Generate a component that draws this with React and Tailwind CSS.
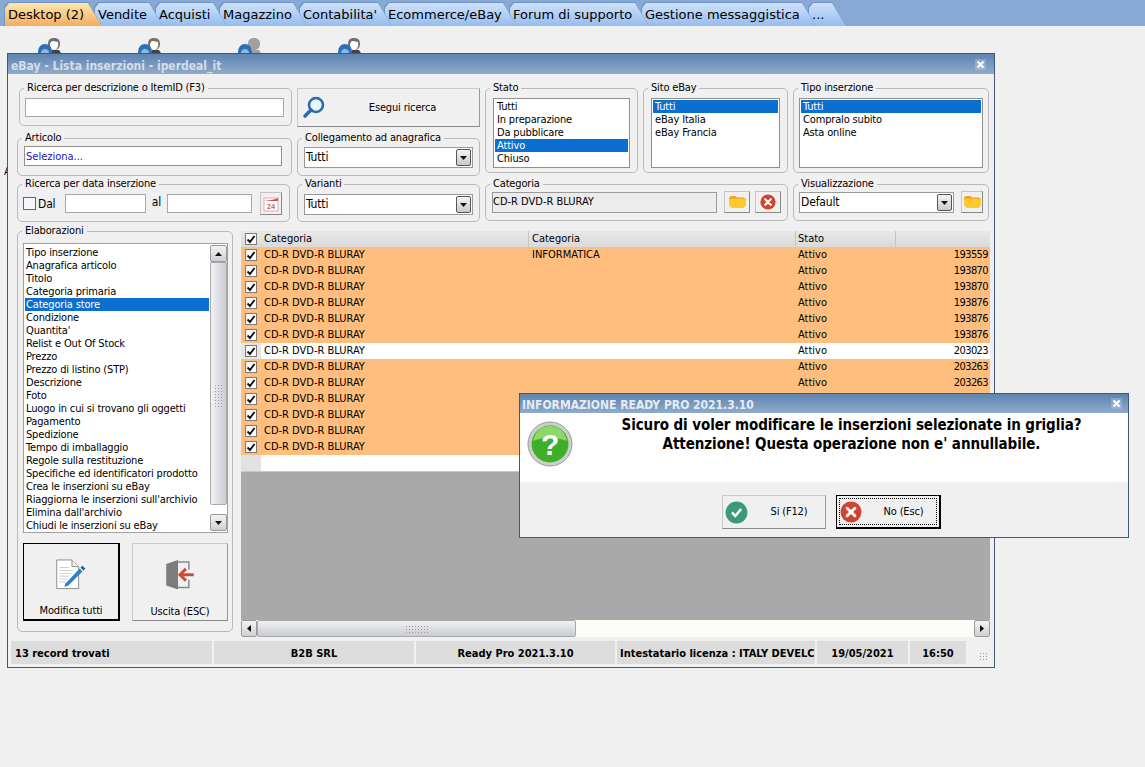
const tabs = [
  { label: 'Desktop (2)', w: 'w-[98px]', z: 'z-[9]', active: true },
  { label: 'Vendite', w: 'w-[69px]', z: 'z-[8]' },
  { label: "Acquisti", w: 'w-[72px]', z: 'z-[7]' },
  { label: 'Magazzino', w: 'w-[88px]', z: 'z-[6]' },
  { label: "Contabilita'", w: 'w-[93px]', z: 'z-[5]' },
  { label: 'Ecommerce/eBay', w: 'w-[133px]', z: 'z-[4]' },
  { label: 'Forum di supporto', w: 'w-[140px]', z: 'z-[3]' },
  { label: 'Gestione messaggistica', w: 'w-[175px]', z: 'z-[2]' },
  { label: '...', w: 'w-[38px]', z: 'z-[1]' },
]

const elaborazioni = [
  'Tipo inserzione', 'Anagrafica articolo', 'Titolo', 'Categoria primaria', 'Categoria store', 'Condizione',
  "Quantita'", 'Relist e Out Of Stock', 'Prezzo', 'Prezzo di listino (STP)', 'Descrizione', 'Foto',
  'Luogo in cui si trovano gli oggetti', 'Pagamento', 'Spedizione', 'Tempo di imballaggio', 'Regole sulla restituzione',
  'Specifiche ed identificatori prodotto', 'Crea le inserzioni su eBay', "Riaggiorna le inserzioni sull'archivio",
  "Elimina dall'archivio", 'Chiudi le inserzioni su eBay',
]

const rows = [
  { cat2: 'INFORMATICA', id: '193559' },
  { id: '193870' },
  { id: '193870' },
  { id: '193876' },
  { id: '193876' },
  { id: '193876' },
  { id: '203023', white: true },
  { id: '203263' },
  { id: '203263' },
  { id: '' },
  { id: '' },
  { id: '' },
  { id: '' },
]

function Group({ label, className = '', pad = '', children }) {
  return (
    <fieldset className={`border border-[#b9b9b9] rounded-[5px] min-w-0 shrink-0 ${className}`}>
      <legend className="ml-[4px] px-[3px] h-[14px] leading-[14px]">{label}</legend>
      <div className={pad}>{children}</div>
    </fieldset>
  )
}

function Listbox({ items, selected, className = '' }) {
  return (
    <div className={`bg-white border border-[#8f8f8f] p-[1px] ${className}`}>
      {items.map((item) => (
        <div key={item} className={`h-[13px] leading-[13px] px-[2px] ${item === selected ? 'bg-[#0a6fd0] text-white' : ''}`}>{item}</div>
      ))}
    </div>
  )
}

function Arrow({ dir = 'down' }) {
  return (
    <svg width="9" height="6" viewBox="0 0 9 6">
      <path d={dir === 'down' ? 'M1 1h7L4.500 5z' : 'M1 5h7L4.500 1z'} fill="#111" />
    </svg>
  )
}

function Select({ value, className = '' }) {
  return (
    <div className={`h-[21px] bg-white border border-[#9a9a9a] flex items-center pl-[1px] pr-[1px] ${className}`}>
      <span className="flex-1 text-[12px] leading-[19px]">{value}</span>
      <div className="w-[15px] h-[17px] rounded-[2px] border border-[#555] bg-gradient-to-b from-[#f4f4f4] to-[#c9c9c9] flex items-center justify-center">
        <Arrow />
      </div>
    </div>
  )
}

function Folder() {
  return (
    <svg width="19" height="14" viewBox="0 0 19 14">
      <path d="M1 5V3.500C1 2 2 1 3.500 1h4L9 2.500h6.500C17 2.500 18 3.500 18 5z" fill="#e9a820" />
      <path d="M1 5c0-.8.600-1.200 1.500-1.200h14c.900 0 1.500.400 1.500 1.200v3.500C18 11.500 16 13 13.500 13h-8C3 13 1 11.500 1 8.500z" fill="#fdc92e" />
    </svg>
  )
}

function RedX({ size = 20 }) {
  return (
    <svg width={size} height={size} viewBox="0 0 20 20">
      <circle cx="10" cy="10" r="9.500" fill="#d0432f" />
      <path d="M6.500 6.500l7 7M13.500 6.500l-7 7" stroke="#fff" strokeWidth="2.600" strokeLinecap="round" />
    </svg>
  )
}

function Check() {
  return (
    <span className="w-[12px] h-[12px] bg-white border border-[#7c7c7c] flex items-center justify-center">
      <svg width="10" height="9" viewBox="0 0 10 9"><path d="M1.500 4.500L4 7l4.500-6" stroke="#111" strokeWidth="2" fill="none" /></svg>
    </span>
  )
}

function ScrollGrip({ className = '' }) {
  return <div className={`bg-[radial-gradient(#9a9a9a_0.6px,transparent_0.8px)] bg-[length:3px_3px] ${className}`} />
}

function CloseX() {
  return (
    <svg width="11" height="11" viewBox="0 0 11 11" className="bg-white/20">
      <path d="M2.500 2.500l6 6M8.500 2.500l-6 6" stroke="#fff" strokeWidth="2.200" />
    </svg>
  )
}

// Due figure sovrapposte: testa chiara dietro, sagoma blu davanti (tagliate dalla finestra)
function Person({ back = '#777', face = '#fff', shoulders = '#444' }) {
  return (
    <svg width="24" height="16" viewBox="0 0 24 16">
      <path d="M13 16l1-3h7l2 3z" fill={shoulders} />
      <path d="M10 7c0-4 2-6 6-6s6 2 6 6c0 3-2 6-6 6s-6-3-6-6z" fill={back} />
      <path d="M12 8c0-2 1-4 3-4l5 1c1 4-1 8-4 8-2 0-4-2-4-5z" fill={face} />
      <path d="M0 16c0-6 3-9 7-9s7 3 7 9z" fill="#2f6fb8" />
      <path d="M3 16c0-3 2-4 4-4s4 1 4 4z" fill="#8fb8e0" />
    </svg>
  )
}

export default function App() {
  return (
    <div className="relative min-h-screen bg-[#f0f0f0] text-[11px] tracking-[-0.16px] text-black overflow-hidden font-['DejaVu_Sans_Condensed','Liberation_Sans',sans-serif]">
      {/* Barra schede */}
      <div className="h-[26px] bg-[#88a9d6] pl-[4px] pt-[2px] flex items-start">
        {tabs.map((t) => (
          <div
            key={t.label}
            className={`relative ${t.z} ${t.w} h-[24px] -mr-[8px] shrink-0 pt-[1px] pl-[1px] bg-[#6f93c6] [clip-path:polygon(0_100%,0_5px,4px_0,calc(100%-14px)_0,100%_100%)]`}
          >
            <div
              className={`h-full w-full pl-[3px] pt-[4px] font-['DejaVu_Sans',sans-serif] tracking-normal text-[13px] leading-[16px] [clip-path:polygon(0_100%,0_5px,4px_0,calc(100%-14px)_0,100%_100%)] ${t.active ? 'bg-gradient-to-b from-[#fde6ac] to-[#f3ad5e]' : 'bg-gradient-to-b from-[#cfe1f9] to-[#94bdf0]'}`}
            >
              {t.label}
            </div>
          </div>
        ))}
      </div>

      {/* Icone desktop */}
      <div className="flex pl-[38px] pt-[11px] gap-[76px]">
        <Person back="#6f6f6f" />
        <Person back="#7f6f66" />
        <Person back="#a0a0a0" face="#a0a0a0" shoulders="#a0a0a0" />
        <Person back="#6f6f6f" />
      </div>
      <span className="absolute left-[4px] top-[164px]">A</span>

      {/* Finestra lista inserzioni */}
      <div className="absolute left-[7px] top-[53px] w-[988px] h-[615px] bg-[#f0f0f0] border border-[#3e5a78] flex flex-col">
        <div className="h-[20px] shrink-0 bg-gradient-to-b from-[#5d84b0] to-[#8fabcb] flex items-center justify-between pl-[3px] pr-[8px]">
          <span className="pt-[3px] font-bold text-[12px] tracking-normal text-[#d5deE8]">eBay - Lista inserzioni - iperdeal_it</span>
          <CloseX />
        </div>

        <div className="flex mt-[7px] shrink-0">
          {/* Colonna filtri sinistra */}
          <div className="w-[463px] ml-[9px] shrink-0">
            <div className="flex">
              <Group label="Ricerca per descrizione o ItemID (F3)" className="ml-[2px] w-[273px] h-[45px]" pad="pl-[5px] pr-[7px]">
                <div className="mt-[3px] h-[19px] bg-white border border-[#a8a8a8]" />
              </Group>
              <button className="ml-[5px] mt-[7px] w-[183px] h-[39px] bg-[#f0f0f0] border border-[#c9c9c9] border-b-[#888] border-r-[#999] flex items-center pl-[4px]">
                <svg width="24" height="24" viewBox="0 0 24 24">
                  <circle cx="14" cy="9" r="7" fill="#eaf4fb" stroke="#2a6da8" strokeWidth="2.600" />
                  <path d="M9 14l-6 6" stroke="#2a6da8" strokeWidth="3.600" strokeLinecap="round" />
                </svg>
                <span className="flex-1 text-center pt-[2px]">Esegui ricerca</span>
              </button>
            </div>
            <div className="flex mt-[4px]">
              <Group label="Articolo" className="w-[275px] h-[45px]" pad="pl-[6px] pr-[9px]">
                <div className="mt-[1px] h-[20px] bg-white border border-[#8f8f8f] text-[#1414c4] tracking-normal leading-[20px] pl-[1px]">Seleziona...</div>
              </Group>
              <Group label="Collegamento ad anagrafica" className="ml-[5px] w-[183px] h-[45px]" pad="px-[6px]">
                <Select value="Tutti" className="mt-[2px]" />
              </Group>
            </div>
            <div className="flex mt-[1px]">
              <Group label="Ricerca per data inserzione" className="w-[273px] h-[45px]" pad="pl-[5px] pr-[7px]">
                <div className="flex items-center mt-[1px]">
                  <span className="w-[13px] h-[13px] bg-[#f4f7fb] border border-[#4c6a8c]" />
                  <span className="ml-[2px] text-[12px] w-[27px]">Dal</span>
                  <div className="w-[81px] h-[19px] bg-white border border-[#a8a8a8]" />
                  <span className="w-[21px] mb-[4px] text-center text-[12px]">al</span>
                  <div className="w-[85px] h-[19px] bg-white border border-[#a8a8a8]" />
                  <button className="ml-[8px] w-[22px] h-[23px] border border-[#c4c4c4] border-b-[#888] border-r-[#888] flex items-center justify-center">
                    <svg width="16" height="16" viewBox="0 0 16 16">
                      <rect x="1" y="2" width="14" height="13" fill="#fff" stroke="#d9b0a8" />
                      <path d="M1 5c4-1 10-1 14-3v3H1z" fill="#d8503c" />
                      <text x="8" y="13" textAnchor="middle" fontSize="7" fontWeight="700" fill="#d8705c">24</text>
                    </svg>
                  </button>
                </div>
              </Group>
              <Group label="Varianti" className="ml-[7px] w-[183px] h-[45px]" pad="px-[6px]">
                <Select value="Tutti" className="mt-[3px]" />
              </Group>
            </div>
          </div>

          {/* Colonna filtri destra */}
          <div className="ml-[5px] w-[505px] shrink-0">
            <div className="flex gap-[5px]">
              <Group label="Stato" className="w-[153px] h-[92px]" pad="px-[7px]">
                <Listbox items={['Tutti', 'In preparazione', 'Da pubblicare', 'Attivo', 'Chiuso']} selected="Attivo" className="mt-[3px] h-[70px]" />
              </Group>
              <Group label="Sito eBay" className="w-[145px] h-[92px]" pad="px-[7px]">
                <Listbox items={['Tutti', 'eBay Italia', 'eBay Francia']} selected="Tutti" className="mt-[3px] h-[70px]" />
              </Group>
              <Group label="Tipo inserzione" className="w-[196px] h-[92px]" pad="px-[5px]">
                <Listbox items={['Tutti', 'Compralo subito', 'Asta online']} selected="Tutti" className="mt-[3px] h-[70px]" />
              </Group>
            </div>
            <div className="flex gap-[5px] mt-[4px]">
              <Group label="Categoria" className="w-[303px] h-[44px]" pad="pl-[6px]">
                <div className="flex items-center">
                  <div className="w-[225px] h-[21px] bg-[#ececec] border border-[#9a9a9a] leading-[17px] tracking-normal">CD-R DVD-R BLURAY</div>
                  <button className="ml-[7px] w-[26px] h-[22px] border border-[#c4c4c4] border-b-[#888] border-r-[#888] flex items-center justify-center"><Folder /></button>
                  <button className="ml-[5px] w-[26px] h-[22px] border border-[#c4c4c4] border-b-[#888] border-r-[#888] flex items-center justify-center"><RedX size={16} /></button>
                </div>
              </Group>
              <Group label="Visualizzazione" className="w-[196px] h-[44px]" pad="px-[5px]">
                <div className="flex items-center">
                  <Select value="Default" className="w-[156px] mt-[1px]" />
                  <button className="ml-[7px] w-[22px] h-[22px] border border-[#c4c4c4] border-b-[#888] border-r-[#888] flex items-center justify-center"><Folder /></button>
                </div>
              </Group>
            </div>
          </div>
        </div>

        <div className="flex mt-[2px] flex-1 min-h-0">
          {/* Elaborazioni */}
          <Group label="Elaborazioni" className="ml-[9px] w-[216px] h-[408px]" pad="pl-[5px] pr-[4px]">
            <div className="mt-[5px] h-[290px] bg-white border border-[#a0a0a0] flex">
              <div className="flex-1 pt-[2px] px-[1px]">
                {elaborazioni.map((e) => (
                  <div key={e} className={`h-[13px] leading-[13px] pl-[1px] ${e === 'Categoria store' ? 'bg-[#0a6fd0] text-white' : ''}`}>{e}</div>
                ))}
              </div>
              <div className="w-[17px] flex flex-col">
                <div className="h-[17px] mt-[1px] rounded-[2px] border border-[#9a9a9a] bg-gradient-to-b from-[#f4f4f4] to-[#d0d0d0] flex items-center justify-center"><Arrow dir="up" /></div>
                <div className="h-[243px] rounded-b-[2px] border border-[#a9a9a9] bg-gradient-to-r from-[#f2f2f4] to-[#c9ccd4] flex items-center justify-center">
                  <ScrollGrip className="w-[9px] h-[24px] mt-[24px]" />
                </div>
                <div className="flex-1" />
                <div className="h-[17px] mb-[1px] rounded-[2px] border border-[#9a9a9a] bg-gradient-to-b from-[#f4f4f4] to-[#d0d0d0] flex items-center justify-center"><Arrow /></div>
              </div>
            </div>
            <div className="flex justify-between mt-[10px]">
              <button className="w-[97px] h-[78px] bg-[#f0f0f0] border border-black border-r-2 border-b-2 flex flex-col items-center pt-[15px]">
                <svg width="32" height="32" viewBox="0 0 32 32">
                  <path d="M1 1h16l7 7v23H1z" fill="#fff" stroke="#8a8a8a" />
                  <path d="M17 1v7h7" fill="#eee" stroke="#8a8a8a" />
                  <path d="M4 9h10M4 12h14M4 15h12M4 18h10M4 21h8M4 24h7" stroke="#c9c9c9" />
                  <path d="M10 26l15-16 3 3-15 15-4 1z" fill="#2f80c8" />
                  <path d="M26 9l2-2 3 3-2 2z" fill="#1f5f9c" />
                </svg>
                <span className="mt-[13px]">Modifica tutti</span>
              </button>
              <button className="w-[96px] h-[78px] bg-[#f0f0f0] border border-[#c9c9c9] border-b-[#888] border-r-[#999] flex flex-col items-center pt-[15px]">
                <svg width="32" height="32" viewBox="0 0 32 32">
                  <path d="M2 5l12-4v30L2 27z" fill="#7c7c7c" />
                  <path d="M14 3h11v8M25 21v8H14" fill="none" stroke="#8a8a8a" strokeWidth="1.500" />
                  <path d="M30 16H17" stroke="#cf4b34" strokeWidth="3" />
                  <path d="M22 10l-6 6 6 6" fill="none" stroke="#cf4b34" strokeWidth="3" />
                </svg>
                <span className="mt-[13px]">Uscita (ESC)</span>
              </button>
            </div>
          </Group>

          {/* Griglia */}
          <div className="ml-[8px] mt-[7px] w-[749px] h-[406px] bg-[#a9a9a9] flex flex-col tracking-normal">
            <div className="flex h-[16px] bg-gradient-to-b from-[#e8e8e8] to-[#dadada] shrink-0">
              <div className="w-[20px] flex items-center justify-center"><Check /></div>
              <div className="w-[268px] pl-[3px] leading-[16px] border-r border-[#c4c4c4]">Categoria</div>
              <div className="w-[267px] pl-[3px] leading-[16px] border-r border-[#c4c4c4]">Categoria</div>
              <div className="w-[100px] pl-[2px] leading-[16px] border-r border-[#c4c4c4]">Stato</div>
              <div className="flex-1" />
            </div>
            {rows.map((r, i) => (
              <div key={i} className={`flex h-[16px] shrink-0 leading-[16px] ${r.white ? 'bg-white' : 'bg-[#ffbe7d]'}`}>
                <div className={`w-[20px] flex items-center justify-center ${r.white ? 'bg-[#e6e6e6]' : ''}`}><Check /></div>
                <div className="w-[268px] pl-[3px]">CD-R DVD-R BLURAY</div>
                <div className="w-[267px] pl-[3px]">{r.cat2}</div>
                <div className="w-[100px] pl-[2px]">Attivo</div>
                <div className="flex-1 text-right pr-[2px] tracking-[-0.6px]">{r.id}</div>
              </div>
            ))}
            <div className="flex h-[17px] shrink-0 bg-white border-b border-[#c8c8c8]">
              <div className="w-[20px] bg-[#e2e2e2]" />
            </div>
            <div className="flex-1" />
            <div className="h-[17px] shrink-0 bg-[#fdfdf8] flex">
              <div className="w-[16px] rounded-[2px] border border-[#9a9a9a] bg-gradient-to-b from-[#f4f4f4] to-[#d0d0d0] flex items-center justify-center">
                <svg width="6" height="9" viewBox="0 0 6 9"><path d="M5 1v7L1 4.500z" fill="#111" /></svg>
              </div>
              <div className="w-[319px] rounded-[2px] border border-[#a9a9a9] bg-gradient-to-b from-[#f2f2f4] to-[#c9ccd4] flex items-center justify-center">
                <ScrollGrip className="w-[24px] h-[8px]" />
              </div>
              <div className="flex-1" />
              <div className="w-[16px] rounded-[2px] border border-[#9a9a9a] bg-gradient-to-b from-[#f4f4f4] to-[#d0d0d0] flex items-center justify-center">
                <svg width="6" height="9" viewBox="0 0 6 9"><path d="M1 1v7l4-3.500z" fill="#111" /></svg>
              </div>
            </div>
          </div>
        </div>

        {/* Barra di stato */}
        <div className="flex gap-[2px] h-[23px] mx-[3px] mb-[3px] font-bold tracking-normal leading-[25px] shrink-0">
          <div className="w-[201px] bg-[#dcdcdc] pl-[4px] whitespace-nowrap">13 record trovati</div>
          <div className="w-[200px] bg-[#dcdcdc] text-center">B2B SRL</div>
          <div className="w-[199px] bg-[#dcdcdc] text-center">Ready Pro 2021.3.10</div>
          <div className="w-[198px] bg-[#dcdcdc] pl-[3px] overflow-hidden whitespace-nowrap">Intestatario licenza : ITALY DEVELC</div>
          <div className="w-[91px] bg-[#dcdcdc] text-center">19/05/2021</div>
          <div className="w-[56px] bg-[#dcdcdc] text-center">16:50</div>
          <div className="flex-1 flex items-end justify-end pb-[4px] pr-[4px]"><ScrollGrip className="w-[8px] h-[8px]" /></div>
        </div>
      </div>

      {/* Finestra di conferma */}
      <div className="absolute left-[519px] top-[393px] w-[610px] h-[145px] bg-[#f0f0f0] border border-[#3e5a78] flex flex-col">
        <div className="h-[19px] shrink-0 bg-gradient-to-b from-[#5d84b0] to-[#8fabcb] flex items-center justify-between pl-[2px] pr-[6px]">
          <span className="pt-[3px] font-bold text-[12px] tracking-normal text-[#e6ecf3]">INFORMAZIONE READY PRO 2021.3.10</span>
          <CloseX />
        </div>
        <div className="h-[69px] shrink-0 bg-white flex">
          <svg width="46" height="46" viewBox="0 0 46 46" className="ml-[7px] mt-[8px] shrink-0">
            <circle cx="23" cy="23" r="22" fill="#c9d0c9" stroke="#9a9a9a" />
            <circle cx="23" cy="23" r="18.500" fill="#3fae2a" />
            <path d="M6 20C8 10 15 5 23 5s15 5 17 15c-8-4-26-4-34 0z" fill="#8fd66b" />
            <text x="23" y="34" textAnchor="middle" fontSize="30" fontWeight="700" fill="#fff" fontFamily="'Liberation Sans', sans-serif">?</text>
          </svg>
          <div className="flex-1 pt-[3px] pl-[2px] text-center font-bold text-[15px] tracking-[-0.08px] leading-[19px]">
            <div>Sicuro di voler modificare le inserzioni selezionate in griglia?</div>
            <div>Attenzione! Questa operazione non e' annullabile.</div>
          </div>
        </div>
        <div className="flex pl-[202px] pt-[13px] gap-[10px]">
          <button className="w-[104px] h-[34px] bg-[#f0f0f0] border border-[#c9c9c9] border-b-[#888] border-r-[#999] flex items-center pl-[2px]">
            <svg width="23" height="23" viewBox="0 0 20 20">
              <circle cx="10" cy="10" r="9.500" fill="#3d9a78" />
              <path d="M6 10l3 3 5-6" stroke="#fff" strokeWidth="2.200" fill="none" />
            </svg>
            <span className="flex-1 text-center pl-[5px] pt-[1px]">Si (F12)</span>
          </button>
          <button className="w-[105px] h-[34px] bg-[#f0f0f0] border border-black border-r-2 border-b-2 flex items-center pl-[3px] relative">
            <RedX size={22} />
            <span className="flex-1 text-center pl-[6px] pt-[1px]">No (Esc)</span>
            <span className="absolute inset-[2px] border border-dotted border-black" />
          </button>
        </div>
      </div>
    </div>
  )
}
